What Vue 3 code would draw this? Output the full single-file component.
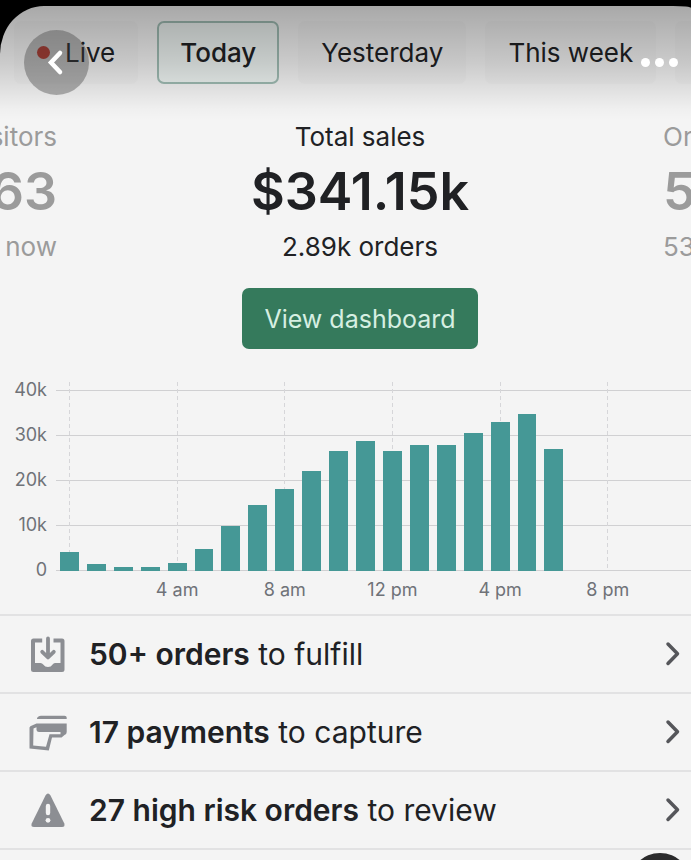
<script setup>
import { ref } from 'vue'

const periods = ['Live', 'Today', 'Yesterday', 'This week', 'This month']
const period = ref('Today')

const max = 42
const ticks = [40, 30, 20, 10, 0]
const sales = [4.2, 1.5, 0.9, 0.9, 1.8, 4.8, 9.9, 14.6, 18.2, 22.3, 26.7, 28.8, 26.7, 28, 28, 30.7, 33.1, 34.9, 27.1, 0, 0, 0, 0, 0]
const hours = ['', '4 am', '8 am', '12 pm', '4 pm', '8 pm']

const tasks = [
  { icon: 'inbox', count: '50+ orders', action: 'to fulfill' },
  { icon: 'payment', count: '17 payments', action: 'to capture' },
  { icon: 'risk', count: '27 high risk orders', action: 'to review' }
]
</script>

<template>
  <main class="screen">
    <div class="sheet">
      <nav class="periods" aria-label="Period">
        <button
          v-for="p in periods"
          :key="p"
          type="button"
          class="chip"
          :class="{ active: p === period }"
          @click="period = p"
        >
          <span v-if="p === 'Live'" class="live-dot"></span>{{ p }}
        </button>
      </nav>

      <section class="metrics">
        <div class="metric previous">
          <p class="label">Visitors</p>
          <p class="value">63</p>
          <p class="label">right now</p>
        </div>
        <div class="metric">
          <p class="label">Total sales</p>
          <p class="value">$341.15k</p>
          <p class="label">2.89k orders</p>
        </div>
        <div class="metric next">
          <p class="label">Orders</p>
          <p class="value">53</p>
          <p class="label">53</p>
        </div>
      </section>

      <button type="button" class="dashboard">View dashboard</button>

      <section class="chart" aria-label="Sales by hour">
        <div class="scale">
          <span v-for="t in ticks" :key="t">{{ t ? t + 'k' : t }}</span>
        </div>
        <div class="area">
          <div class="plot">
            <div class="lines"><i v-for="t in ticks" :key="t"></i></div>
            <div class="guides"><i v-for="h in hours" :key="h"></i></div>
            <div class="bars">
              <i v-for="(v, n) in sales" :key="n" :style="{ height: (v / max) * 100 + '%' }"></i>
            </div>
          </div>
          <div class="hours"><span v-for="h in hours" :key="h">{{ h }}</span></div>
        </div>
      </section>

      <ul class="tasks">
        <li v-for="t in tasks" :key="t.icon">
          <a href="#" class="task">
            <svg v-if="t.icon === 'inbox'" class="icon" viewBox="0 0 40 40">
              <path d="M14.200 4.500H5.500Q3 4.500 3 7V35.500Q3 38 5.500 38H34Q36.500 38 36.500 35.500V7Q36.500 4.500 34 4.500H25.500V8.500H32.500V29H27Q25.500 29 24.600 30.500Q23 33 20 33Q17 33 15.200 30.500Q14.200 29 12.500 29H7V8.500H14.200Z" fill="#8c8e93" />
              <path d="M20 4.500V22M14.200 17.800L20 23.500L25.800 17.800" fill="none" stroke="#8c8e93" stroke-width="3.800" stroke-linecap="round" stroke-linejoin="round" />
            </svg>
            <svg v-else-if="t.icon === 'payment'" class="icon" viewBox="0 0 40 40">
              <path d="M9 6.500Q9 5.500 10.500 4.500Q11.500 3.700 13 3.700H36.500Q38.700 3.700 38.700 5.500V7H9Z" fill="#8c8e93" />
              <path d="M8.500 11.500H38.700V20Q38.700 22.500 36.500 23L33.500 25.500H24L20.800 38.500L1.500 36.500V15.500Q2 14 4 13.500Z" fill="#8c8e93" />
              <path d="M5.500 16.500L8.500 15.200V18Q8.800 20 11 20H32.500V22.200H21.500L18 34.800L5.200 33.500Z" fill="#f4f4f4" />
            </svg>
            <svg v-else class="icon" viewBox="0 0 40 40">
              <path d="M17.500 5.500Q20 1.500 22.500 5.500L36.300 33.500Q37.300 37 34 37H6Q2.500 37 3.700 33.500Z" fill="#8c8e93" />
              <path d="M20 16V23" stroke="#f4f4f4" stroke-width="4.400" stroke-linecap="round" />
              <circle cx="20" cy="30.300" r="2.400" fill="#f4f4f4" />
            </svg>
            <span class="text"><strong>{{ t.count }}</strong> {{ t.action }}</span>
            <svg class="chevron" viewBox="0 0 16 26">
              <path d="M3 3L12.500 12.700L3 22.500" fill="none" stroke="#55565a" stroke-width="3.500" stroke-linecap="round" stroke-linejoin="round" />
            </svg>
          </a>
        </li>
      </ul>
    </div>

    <header class="overlay">
      <button type="button" class="back" aria-label="Back">
        <svg viewBox="0 0 65 65">
          <path d="M36 23L27 32.500L36 42" fill="none" stroke="#fff" stroke-width="4.500" stroke-linecap="round" stroke-linejoin="miter" />
        </svg>
      </button>
      <button type="button" class="more" aria-label="More">
        <i></i><i></i><i></i>
      </button>
    </header>
    <button type="button" class="floating" aria-label="Search"></button>
  </main>
</template>

<style>
body {
  margin: 0;
  background: #000;
}
</style>

<style scoped>
.screen {
  position: relative;
  box-sizing: border-box;
  height: 100vh;
  padding-top: 6px;
  overflow: hidden;
  background: #000;
  color: #202124;
  font-family: Inter, "Liberation Sans", sans-serif;
}
button {
  border: 0;
  padding: 0;
  margin: 0;
  background: none;
  font: inherit;
  color: inherit;
}
p,
ul {
  margin: 0;
  padding: 0;
  list-style: none;
}
.sheet {
  display: flex;
  flex-direction: column;
  min-height: 100%;
  overflow: hidden;
  background: #f4f4f4;
  border-radius: 44px 18px 0 0 / 48px 2px 0 0;
}
.periods {
  display: flex;
  gap: 19px;
  padding: 15px 0 0 14px;
}
.chip {
  box-sizing: border-box;
  display: flex;
  flex: none;
  align-items: center;
  height: 63px;
  padding: 0 21px;
  border: 2px solid transparent;
  border-radius: 7px;
  background: #f0f0f0;
  font-size: 26px;
  white-space: nowrap;
}
.chip.active {
  border-color: #9fbcb3;
  background: #eef4f2;
  font-weight: 500;
}
.live-dot {
  width: 13px;
  height: 13px;
  margin-right: 15px;
  border-radius: 50%;
  background: #d8392b;
}
.metrics {
  display: grid;
  grid-template-columns: 57px 1fr 28px;
  padding-top: 34px;
  overflow: hidden;
}
.metric {
  display: flex;
  flex-direction: column;
  align-items: center;
  white-space: nowrap;
}
.metric.previous,
.metric.next {
  color: #9b9b9b;
}
.metric.previous {
  align-items: flex-end;
}
.metric.next {
  align-items: flex-start;
}
.label {
  font-size: 26px;
  line-height: 38px;
}
.value {
  font-size: 52px;
  font-weight: 600;
  line-height: 72px;
}
.dashboard {
  align-self: center;
  height: 61px;
  margin: 22px 0 0 29px;
  padding: 0 22px;
  border-radius: 7px;
  background: #357a5c;
  color: #d6efe2;
  font-size: 25px;
}
.chart {
  display: flex;
  gap: 9px;
  margin-top: 33px;
  color: #6f7278;
  font-size: 18px;
}
.scale {
  display: flex;
  flex-direction: column;
  width: 47px;
  text-align: right;
  margin-top: -15px;
}
.scale span {
  height: 45px;
  line-height: 45px;
}
.area {
  flex: 1;
  margin-right: -11px;
}
.plot {
  position: relative;
  height: 189px;
}
.lines,
.guides,
.bars {
  position: absolute;
  inset: 0;
}
.lines {
  display: flex;
  flex-direction: column;
  justify-content: space-between;
  padding-top: 8px;
}
.lines i {
  height: 1px;
  background: #d0d0d2;
}
.guides,
.hours {
  display: grid;
  grid-template-columns: repeat(6, 1fr);
}
.guides i {
  width: 25%;
  background: repeating-linear-gradient(to bottom, #d6d6d9 0 4px, transparent 4px 7px) center / 1px 100% no-repeat;
}
.bars {
  display: grid;
  grid-template-columns: repeat(24, 1fr);
  align-items: end;
}
.bars i {
  margin: 0 4px;
  background: #459896;
}
.hours {
  padding-top: 6px;
  line-height: 26px;
}
.hours span {
  display: flex;
  justify-content: center;
  width: 25%;
  white-space: nowrap;
}
.tasks {
  margin-top: 11px;
  border-top: 2px solid #e2e2e3;
}
.tasks li {
  border-bottom: 2px solid #e2e2e3;
}
.task {
  display: flex;
  align-items: center;
  height: 76px;
  padding: 0 10px 0 28px;
  color: inherit;
  font-size: 30px;
  text-decoration: none;
  white-space: nowrap;
}
.task strong {
  font-weight: 600;
}
.icon {
  flex: none;
  width: 40px;
  height: 40px;
}
.text {
  flex: 1;
  padding-left: 21px;
}
.chevron {
  flex: none;
  width: 16px;
  height: 26px;
}
.overlay {
  position: absolute;
  inset: 6px 0 auto;
  display: flex;
  align-items: flex-start;
  justify-content: space-between;
  box-sizing: border-box;
  height: 114px;
  padding: 24px 13px 0 24px;
  background: linear-gradient(rgba(0, 0, 0, 0.31), rgba(0, 0, 0, 0.17) 50%, rgba(0, 0, 0, 0.02) 90%, transparent);
}
.back {
  width: 65px;
  height: 65px;
  border-radius: 50%;
  background: rgba(60, 60, 60, 0.38);
}
.back svg {
  display: block;
}
.more {
  display: flex;
  gap: 5px;
  padding: 28px 0;
}
.more i {
  width: 9px;
  height: 9px;
  border-radius: 50%;
  background: #fff;
}
.floating {
  position: absolute;
  right: 0;
  bottom: -55px;
  width: 62px;
  height: 62px;
  border-radius: 50%;
  background: #2b2b2c;
}
</style>
